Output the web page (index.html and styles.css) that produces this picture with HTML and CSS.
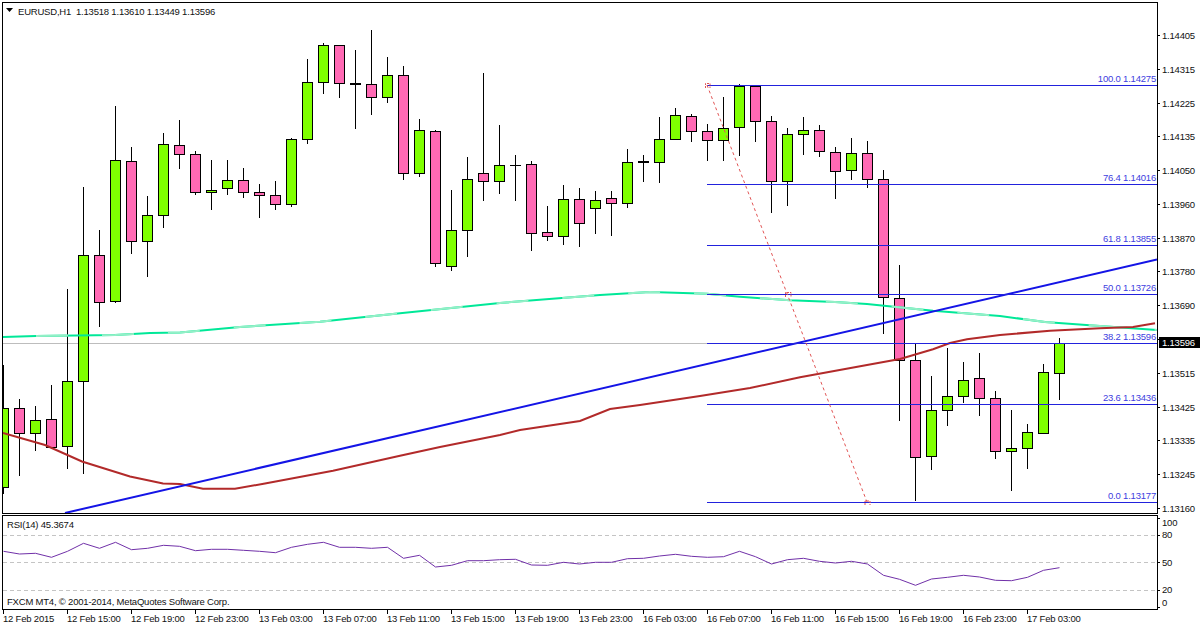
FILE: index.html
```html
<!DOCTYPE html>
<html lang="en">
<head>
<meta charset="utf-8">
<title>EURUSD,H1</title>
<link rel="stylesheet" href="styles.css">
</head>
<body>
<main class="terminal">
  <section class="pane pane-main">
    <svg class="chart" width="1154" height="510" viewBox="3 3 1154 510">
      <path class="price-line" d="M3 343.5H1157"/>
      <path class="wick" d="M3.5 365V494M19.5 399V476M35.5 406V451M51.5 385V449M67.5 289V469M83.5 187V473.5M99.5 230V327M115.5 106V303M131.5 147V254M147.5 196V277M163.5 133V228M179.5 120V169M195.5 151V195M211.5 160V210M227.5 160V195M243.5 168V198M259.5 184V218M275.5 181V210M291.5 138V207M307.5 59V144M323.5 43V94M339.5 45V98M355.5 50V129M371.5 30V115M387.5 57V103M403.5 66V180M419.5 119V177M435.5 130V267M451.5 190V271M467.5 157V257M483.5 73V201M499.5 125V194M515.5 155V201M531.5 161V251M547.5 206V241M563.5 185V245M579.5 188V247M595.5 191V234M611.5 191V236M627.5 149V208M643.5 155V182M659.5 117V183M675.5 108V139M691.5 114V142M707.5 124V161M723.5 97V161M739.5 84V156M755.5 86V142M771.5 116V213M787.5 128V206M803.5 117V155M819.5 125V157M835.5 147V199M851.5 138V180M867.5 141V188M883.5 170V334M899.5 265V421M915.5 344V501M931.5 376V470M947.5 348V426M963.5 362V403M979.5 353V416M995.5 391V459M1011.5 410V491M1027.5 424V469M1043.5 364V434M1059.5 338V400"/>
      <path class="doji" d="M510 165.5H521"/>
      <path class="doji doji-thick" d="M350 84H361M638 161.5H649"/>
      <g class="up">
        <rect x="-1.5" y="408.5" width="10" height="79"/><rect x="30.5" y="420.5" width="10" height="13"/><rect x="62.5" y="381.5" width="10" height="65"/><rect x="78.5" y="255.5" width="10" height="126"/><rect x="110.5" y="160.5" width="10" height="141"/><rect x="142.5" y="215.5" width="10" height="26"/><rect x="158.5" y="144.5" width="10" height="71"/><rect x="206.5" y="190.5" width="10" height="2"/><rect x="222.5" y="180.5" width="10" height="8"/><rect x="286.5" y="139.5" width="10" height="65"/><rect x="302.5" y="82.5" width="10" height="57"/><rect x="318.5" y="45.5" width="10" height="37"/><rect x="382.5" y="75.5" width="10" height="22"/><rect x="414.5" y="130.5" width="10" height="43"/><rect x="446.5" y="230.5" width="10" height="36"/><rect x="462.5" y="179.5" width="10" height="51"/><rect x="494.5" y="165.5" width="10" height="16"/><rect x="558.5" y="199.5" width="10" height="37"/><rect x="590.5" y="200.5" width="10" height="8"/><rect x="622.5" y="162.5" width="10" height="41"/><rect x="654.5" y="139.5" width="10" height="23"/><rect x="670.5" y="115.5" width="10" height="24"/><rect x="718.5" y="128.5" width="10" height="12"/><rect x="734.5" y="86.5" width="10" height="41"/><rect x="782.5" y="134.5" width="10" height="47"/><rect x="798.5" y="130.5" width="10" height="4"/><rect x="846.5" y="153.5" width="10" height="17"/><rect x="926.5" y="410.5" width="10" height="46"/><rect x="942.5" y="396.5" width="10" height="14"/><rect x="958.5" y="380.5" width="10" height="16"/><rect x="1006.5" y="448.5" width="10" height="3"/><rect x="1022.5" y="432.5" width="10" height="16"/><rect x="1038.5" y="372.5" width="10" height="61"/><rect x="1054.5" y="343.5" width="10" height="30"/>
      </g>
      <g class="down">
        <rect x="14.5" y="408.5" width="10" height="25"/><rect x="46.5" y="419.5" width="10" height="28"/><rect x="94.5" y="255.5" width="10" height="47"/><rect x="126.5" y="161.5" width="10" height="80"/><rect x="174.5" y="145.5" width="10" height="9"/><rect x="190.5" y="154.5" width="10" height="38"/><rect x="238.5" y="180.5" width="10" height="12"/><rect x="254.5" y="192.5" width="10" height="3"/><rect x="270.5" y="195.5" width="10" height="9"/><rect x="334.5" y="45.5" width="10" height="38"/><rect x="366.5" y="84.5" width="10" height="13"/><rect x="398.5" y="75.5" width="10" height="98"/><rect x="430.5" y="131.5" width="10" height="132"/><rect x="478.5" y="173.5" width="10" height="8"/><rect x="526.5" y="164.5" width="10" height="69"/><rect x="542.5" y="232.5" width="10" height="4"/><rect x="574.5" y="199.5" width="10" height="24"/><rect x="606.5" y="198.5" width="10" height="5"/><rect x="686.5" y="116.5" width="10" height="15"/><rect x="702.5" y="131.5" width="10" height="9"/><rect x="750.5" y="86.5" width="10" height="35"/><rect x="766.5" y="121.5" width="10" height="60"/><rect x="814.5" y="130.5" width="10" height="21"/><rect x="830.5" y="152.5" width="10" height="19"/><rect x="862.5" y="153.5" width="10" height="26"/><rect x="878.5" y="179.5" width="10" height="118"/><rect x="894.5" y="298.5" width="10" height="62"/><rect x="910.5" y="360.5" width="10" height="97"/><rect x="974.5" y="378.5" width="10" height="20"/><rect x="990.5" y="398.5" width="10" height="53"/>
      </g>
      <polyline class="ma-green" points="3,337 36,336 115,335 150,333 180,332.5 240,327 320,321.7 400,313.3 500,303 600,295 650,292 675,292.7 707,293.7 740,296.7 790,300.3 835,302 867,304 933,310.7 1000,316 1045,322 1100,326 1157,330"/>
      <polyline class="ma-green-light" points="3,337 36,336 115,335 150,333 180,332.5 240,327 320,321.7 400,313.3 500,303 600,295 650,292 675,292.7 707,293.7 740,296.7 790,300.3 835,302 867,304 933,310.7 1000,316 1045,322 1100,326 1157,330"/>
      <polyline class="ma-red" points="3,433 45,445 82,461.5 130,476.5 163,483.5 180,484 203,488.7 235,488.7 265,483.5 333,470.7 400,455.7 440,447 500,435 520,430 580,421 610,409 640,405 700,396 750,388 800,377.3 867,365 900,359 933,349.3 950,343 967,339.3 1000,335 1050,330.7 1100,328.3 1133,327 1155,323.3"/>
      <path class="trend" d="M65 513L1157 259.5"/>
      <path class="fibo" d="M707 85.5H1157M707 184.5H1157M707 245.5H1157M707 294.5H1157M707 343.5H1157M707 404.5H1157M707 502.5H1157"/>
      <path class="fibo-axis" d="M707 85L867 502"/>
      <path class="fibo-mark" d="M705.500 88V83.500H710V88M785.500 297V292.500H791V297M865 505V501H870V505"/>
      <g class="label fibo-label">
        <text x="1156" y="82">100.0 1.14275</text>
        <text x="1156" y="181">76.4 1.14016</text>
        <text x="1156" y="242">61.8 1.13855</text>
        <text x="1156" y="291">50.0 1.13726</text>
        <text x="1156" y="340">38.2 1.13596</text>
        <text x="1156" y="401">23.6 1.13436</text>
        <text x="1156" y="499">0.0 1.13177</text>
      </g>
      <path class="title-arrow" d="M6 8H13L9.500 12Z"/>
      <text class="label title" x="18" y="14.500" xml:space="preserve">EURUSD,H1  1.13518 1.13610 1.13449 1.13596</text>
    </svg>
    <ul class="price-axis">
      <li>1.14405</li><li>1.14315</li><li>1.14225</li><li>1.14135</li><li>1.14050</li><li>1.13960</li><li>1.13870</li><li>1.13780</li><li>1.13690</li><li class="hidden-tick">1.13600</li><li>1.13515</li><li>1.13425</li><li>1.13335</li><li>1.13245</li><li>1.13160</li>
      <li class="last-price">1.13596</li>
    </ul>
  </section>
  <section class="pane pane-rsi">
    <svg class="chart" width="1154" height="93" viewBox="3 516 1154 93">
      <path class="level" d="M3 535.5H1157M3 562.5H1157M3 590.5H1157"/>
      <polyline class="rsi" points="3.500,551.300 19.500,554 35.500,553.300 51.500,557.300 67.500,551.300 83.500,543.300 99.500,548.300 115.500,542.300 131.500,549.700 147.500,548.300 163.500,545.300 179.500,546.300 195.500,550.700 211.500,549.300 227.500,549.300 243.500,550.300 259.500,551.300 275.500,552.700 291.500,547.300 307.500,544.300 323.500,542.300 339.500,547.300 355.500,547.300 371.500,548.300 387.500,547.300 403.500,558.300 419.500,555.300 435.500,567 451.500,565.300 467.500,560.700 483.500,560.700 499.500,559.700 515.500,559.300 531.500,565 547.500,565.300 563.500,562.300 579.500,564 595.500,562.300 611.500,562.300 627.500,558.700 643.500,558.300 659.500,556 675.500,554.300 691.500,556.300 707.500,557.300 723.500,556.700 739.500,551.300 755.500,556.700 771.500,564 787.500,559.700 803.500,558.300 819.500,561.300 835.500,563 851.500,561.300 867.500,564 883.500,575.300 899.500,579.300 915.500,585.300 931.500,579 947.500,577.300 963.500,575.300 979.500,577 995.500,580.300 1011.500,580.700 1027.500,577.300 1043.500,570.300 1059.500,567.700"/>
      <text class="label" x="7" y="528">RSI(14) 45.3674</text>
      <text class="label" x="7" y="605">FXCM MT4, © 2001-2014, MetaQuotes Software Corp.</text>
    </svg>
    <svg class="rsi-axis" width="42" height="95" viewBox="1158 515 42 95">
      <path class="tick" d="M1158 518.500H1160M1158 535.500H1160M1158 562.500H1160M1158 590.500H1160M1158 607.500H1160"/>
      <g class="label">
        <text x="1162" y="526">100</text>
        <text x="1162" y="538">80</text>
        <text x="1162" y="565.500">50</text>
        <text x="1162" y="593">20</text>
        <text x="1162" y="605.500">0</text>
      </g>
    </svg>
  </section>
  <ol class="time-axis">
    <li>12 Feb 2015</li><li>12 Feb 15:00</li><li>12 Feb 19:00</li><li>12 Feb 23:00</li><li>13 Feb 03:00</li><li>13 Feb 07:00</li><li>13 Feb 11:00</li><li>13 Feb 15:00</li><li>13 Feb 19:00</li><li>13 Feb 23:00</li><li>16 Feb 03:00</li><li>16 Feb 07:00</li><li>16 Feb 11:00</li><li>16 Feb 15:00</li><li>16 Feb 19:00</li><li>16 Feb 23:00</li><li>17 Feb 03:00</li>
  </ol>
</main>
</body>
</html>
```

FILE: styles.css
```css
* { box-sizing: border-box; }
html, body { margin: 0; background: #fff; }
body {
  width: 1200px;
  height: 627px;
  overflow: hidden;
  font: 9.5px/11px "Liberation Sans", Arial, sans-serif;
  letter-spacing: -0.2px;
  color: #111;
}
.terminal {
  display: flex;
  flex-direction: column;
  padding: 2px 0 0 2px;
}
.pane { display: flex; }
.pane-main { height: 512px; margin-bottom: 1px; }
.pane-rsi { height: 95px; }
.chart {
  display: block;
  box-sizing: content-box;
  border: 1px solid #000;
  overflow: hidden;
  background: #fff;
}
.wick, .doji { stroke: #000; stroke-width: 1; fill: none; shape-rendering: crispEdges; }
.doji-thick { stroke-width: 2; }
.up rect, .down rect { stroke: #000; stroke-width: 1; shape-rendering: crispEdges; }
.up rect { fill: #7fff00; }
.down rect { fill: #ff69b4; }
.price-line { stroke: #bdbdbd; stroke-width: 1; fill: none; }
.ma-green, .ma-green-light, .ma-red, .trend, .fibo, .fibo-axis, .fibo-mark, .rsi, .level { fill: none; }
.ma-green { stroke: #00e898; stroke-width: 2; }
.ma-green-light { stroke: #93efc6; stroke-width: 2; stroke-dasharray: 32 34; stroke-dashoffset: -33; }
.ma-red { stroke: #b22a2a; stroke-width: 2; }
.trend { stroke: #1414e6; stroke-width: 2; }
.fibo { stroke: #2222dd; stroke-width: 1; shape-rendering: crispEdges; }
.fibo-axis { stroke: #e25555; stroke-width: 1; stroke-dasharray: 3 3; }
.fibo-mark { stroke: #e25555; stroke-width: 1; stroke-dasharray: 2 1; }
.label text, text.label { fill: #111; font: 9.5px "Liberation Sans", Arial, sans-serif; letter-spacing: -0.2px; }
.fibo-label text { fill: #4040e0; text-anchor: end; }
.title { white-space: pre; }
.title-arrow { fill: #000; }
.level { stroke: #c4c4c4; stroke-width: 1; stroke-dasharray: 4 3; shape-rendering: crispEdges; }
.rsi { stroke: #7030a8; stroke-width: 1; }
.tick { stroke: #000; stroke-width: 1; fill: none; shape-rendering: crispEdges; }
.price-axis {
  position: relative;
  flex: 1;
  display: flex;
  flex-direction: column;
  justify-content: space-between;
  margin: 0;
  padding: 28px 0 0 0;
  list-style: none;
}
.price-axis li {
  display: flex;
  align-items: center;
  gap: 2px;
  height: 11px;
}
.price-axis li::before {
  content: "";
  width: 2px;
  height: 1px;
  background: #000;
}
.price-axis .hidden-tick { color: transparent; }
.price-axis .last-price {
  position: absolute;
  left: 1px;
  right: 0;
  top: 335px;
  padding-left: 3px;
  background: #000;
  color: #fff;
}
.price-axis .last-price::before { display: none; }
.time-axis {
  display: flex;
  margin: 0;
  padding: 0 0 0 1px;
  list-style: none;
}
.time-axis li {
  position: relative;
  flex: 0 0 64px;
  padding-top: 3px;
  white-space: nowrap;
}
.time-axis li::before {
  content: "";
  position: absolute;
  left: 0;
  top: 0;
  width: 1px;
  height: 4px;
  background: #000;
}
```
